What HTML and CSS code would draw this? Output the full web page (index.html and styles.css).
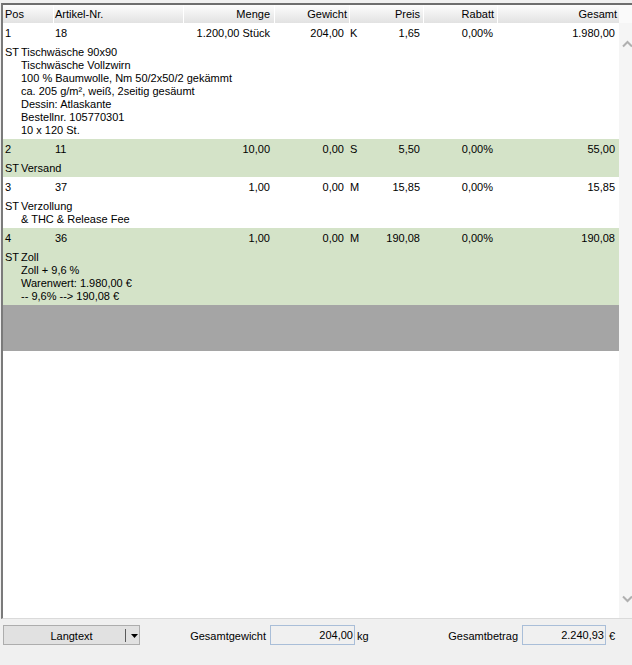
FILE: index.html
```html
<!DOCTYPE html>
<html>
<head>
<meta charset="utf-8">
<link rel="stylesheet" href="styles.css">
</head>
<body>
<div class="frame">
  <div class="table">
    <div class="head">
      <div class="hc hpos">Pos</div>
      <div class="hc hart">Artikel-Nr.</div>
      <div class="hc hmenge">Menge</div>
      <div class="hc hgew">Gewicht</div>
      <div class="hc hpreis">Preis</div>
      <div class="hc hrab">Rabatt</div>
      <div class="hc hges">Gesamt</div>
    </div>
    <div class="body">
      <div class="row">
        <div class="main">
          <span class="c">1</span><span class="c">18</span><span class="c r">1.200,00 Stück</span><span class="c r">204,00</span><span class="c u">K</span><span class="c r">1,65</span><span class="c r">0,00%</span><span class="c r last">1.980,00</span>
        </div>
        <div class="desc">
          <span class="st">ST</span>
          <div class="lines">
            <div>Tischwäsche 90x90</div>
            <div>Tischwäsche Vollzwirn</div>
            <div>100 % Baumwolle, Nm 50/2x50/2 gekämmt</div>
            <div>ca. 205 g/m², weiß, 2seitig gesäumt</div>
            <div>Dessin: Atlaskante</div>
            <div>Bestellnr. 105770301</div>
            <div>10 x 120 St.</div>
          </div>
        </div>
      </div>
      <div class="row alt">
        <div class="main">
          <span class="c">2</span><span class="c">11</span><span class="c r">10,00</span><span class="c r">0,00</span><span class="c u">S</span><span class="c r">5,50</span><span class="c r">0,00%</span><span class="c r last">55,00</span>
        </div>
        <div class="desc">
          <span class="st">ST</span>
          <div class="lines"><div>Versand</div></div>
        </div>
      </div>
      <div class="row">
        <div class="main">
          <span class="c">3</span><span class="c">37</span><span class="c r">1,00</span><span class="c r">0,00</span><span class="c u">M</span><span class="c r">15,85</span><span class="c r">0,00%</span><span class="c r last">15,85</span>
        </div>
        <div class="desc">
          <span class="st">ST</span>
          <div class="lines"><div>Verzollung</div><div>&amp; THC &amp; Release Fee</div></div>
        </div>
      </div>
      <div class="row alt">
        <div class="main">
          <span class="c">4</span><span class="c">36</span><span class="c r">1,00</span><span class="c r">0,00</span><span class="c u">M</span><span class="c r">190,08</span><span class="c r">0,00%</span><span class="c r last">190,08</span>
        </div>
        <div class="desc">
          <span class="st">ST</span>
          <div class="lines"><div>Zoll</div><div>Zoll + 9,6 %</div><div>Warenwert: 1.980,00 €</div><div>-- 9,6% --&gt; 190,08 €</div></div>
        </div>
      </div>
      <div class="band"></div>
    </div>
  </div>
  <div class="scroll">
    <div class="scroll-top"></div>
    <div class="scroll-track">
      <svg class="chev" width="13" height="10" viewBox="0 0 13 10"><polyline points="4,7.5 8.5,3 13,7.5" fill="none" stroke="#b0b0b0" stroke-width="2"/></svg>
      <svg class="chev" width="13" height="10" viewBox="0 0 13 10"><polyline points="4,2.5 8.5,7 13,2.5" fill="none" stroke="#b0b0b0" stroke-width="2"/></svg>
    </div>
  </div>
</div>
<div class="footer">
  <div class="btn">
    <span class="btn-label">Langtext</span>
    <span class="btn-sep"></span>
    <svg class="btn-arrow" width="7" height="4" viewBox="0 0 7 4"><polygon points="0,0 7,0 3.5,4" fill="#000"/></svg>
  </div>
  <div class="lbl lbl1">Gesamtgewicht</div>
  <div class="field f1">204,00</div>
  <div class="unit u1">kg</div>
  <div class="lbl lbl2">Gesamtbetrag</div>
  <div class="field f2">2.240,93</div>
  <div class="unit u2">€</div>
</div>
</body>
</html>
```
FILE: styles.css
```css
html, body {
  margin: 0;
  padding: 0;
}
body {
  width: 632px;
  height: 665px;
  overflow: hidden;
  background: #f0f0f0;
  font-family: "Liberation Sans", Arial, sans-serif;
  font-size: 11px;
  color: #000;
}
.frame {
  display: flex;
  margin-top: 3px;
  margin-left: 1px;
  height: 613px;
  border-top: 2px solid #6e6e6e;
  border-left: 2px solid #7a7a7a;
  border-bottom: 1px solid #dadada;
  background: #fff;
}
.table {
  width: 616px;
  display: flex;
  flex-direction: column;
}
.head {
  display: grid;
  grid-template-columns: 50px 130px 91px 75px 74px 74px 121px;
  height: 18px;
  box-sizing: border-box;
  padding-top: 1px;
  line-height: 17px;
  background: linear-gradient(#fdfdfd, #e2e2e2);
}
.hc {
  border-left: 1px solid #ffffff;
  margin-top: -1px;
  padding-top: 1px;
  white-space: nowrap;
}
.hpos { border-left: none; padding-left: 2px; }
.hart { padding-left: 1px; }
.hmenge { text-align: right; padding-right: 4px; }
.hgew { text-align: right; padding-right: 2px; }
.hpreis { text-align: right; padding-right: 3px; }
.hrab { text-align: right; padding-right: 3px; }
.hges { text-align: right; padding-right: 1px; }
.body {
  flex: 1;
  background: #fff;
}
.row {
  padding: 4px 0 2px 0;
  background: #fff;
}
.row.alt {
  background: #d4e3c8;
}
.main {
  display: grid;
  grid-template-columns: 50px 130px 89px 74px 26px 50px 73px 123px;
  height: 13px;
  line-height: 13px;
  margin-bottom: 6px;
  white-space: nowrap;
}
.c { padding-left: 2px; }
.c.r { text-align: right; padding-left: 0; padding-right: 2px; }
.c.u { padding-left: 4px; }
.c.last { padding-right: 3px; }
.desc {
  display: flex;
  line-height: 13px;
  padding-left: 2px;
}
.st { width: 16px; }
.lines { white-space: nowrap; }
.band {
  height: 46px;
  background: #a5a5a5;
}
.scroll {
  width: 13px;
  display: flex;
  flex-direction: column;
  background: #f5f5f5;
}
.scroll-top {
  height: 18px;
  background: #fafafa;
}
.scroll-track {
  flex: 1;
  display: flex;
  flex-direction: column;
  justify-content: space-between;
  padding: 16px 0 14px 0;
}
.chev { display: block; }
.footer {
  display: flex;
  align-items: center;
  height: 20px;
  margin-top: 6px;
  line-height: 20px;
}
.btn {
  position: relative;
  margin-left: 3px;
  width: 135px;
  height: 18px;
  border: 1px solid #adadad;
  background: #e1e1e1;
  display: flex;
  align-items: center;
}
.btn-label {
  width: 135px;
  text-align: center;
  padding-top: 1px;
}
.btn-sep {
  position: absolute;
  left: 121px;
  top: 3px;
  width: 1px;
  height: 13px;
  background: #5a5a5a;
}
.btn-arrow {
  position: absolute;
  left: 127px;
  top: 8px;
}
.lbl {
  text-align: right;
  white-space: nowrap;
  padding-top: 1px;
}
.lbl1 { width: 126px; margin-right: 4px; }
.field {
  height: 18px;
  line-height: 19px;
  border: 1px solid #a9bed8;
  background: #f0f0f0;
  text-align: right;
  padding-right: 1px;
  box-sizing: content-box;
}
.f1 { width: 82px; }
.unit { padding-left: 2px; padding-top: 1px; }
.u1 { width: 28px; }
.lbl2 { width: 133px; margin-right: 4px; }
.f2 { width: 81px; }
.u2 { padding-left: 3px; }
```
